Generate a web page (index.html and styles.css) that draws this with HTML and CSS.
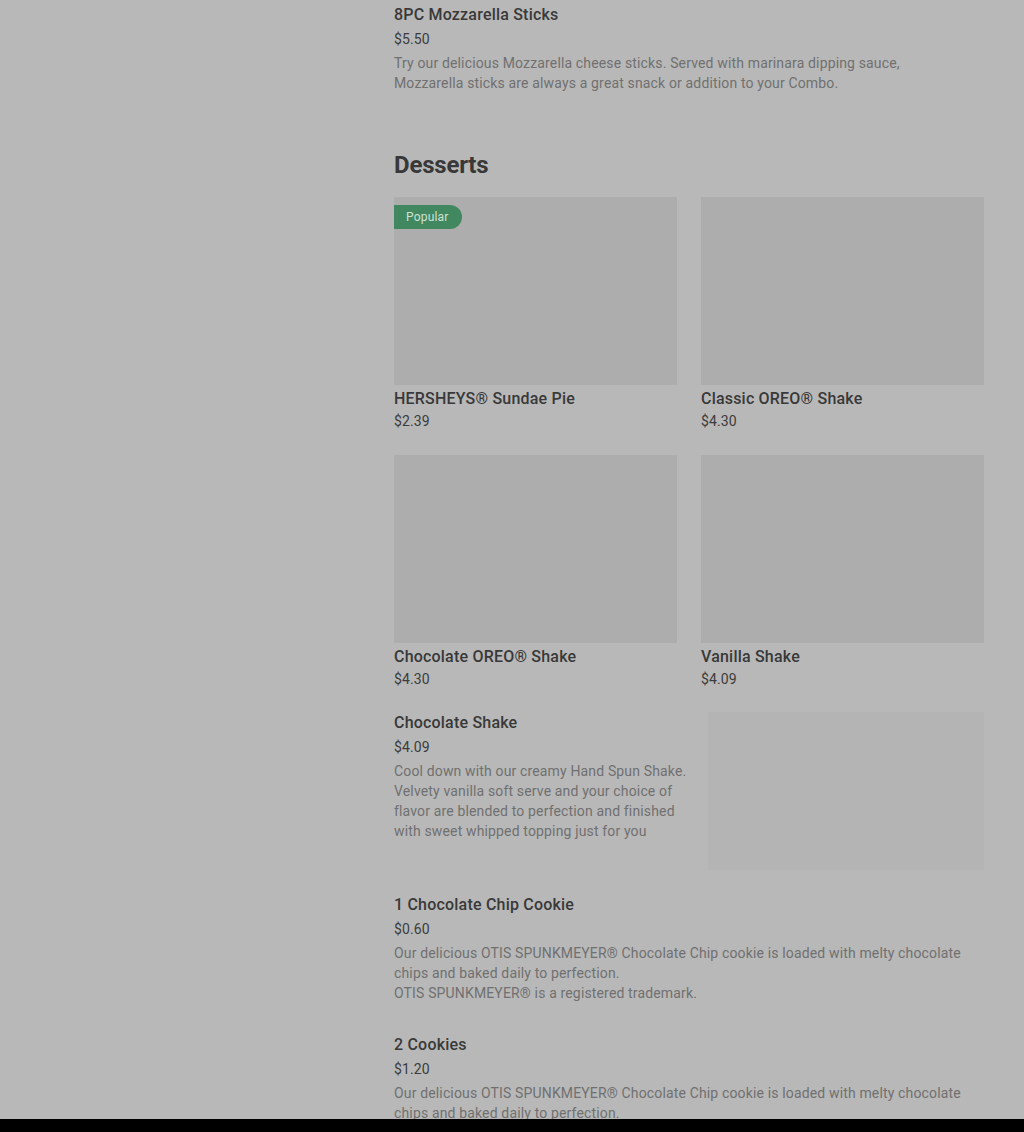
FILE: index.html
```html
<!DOCTYPE html>
<html lang="en">
<head>
    <meta charset="UTF-8">
    <meta name="viewport" content="width=device-width, initial-scale=1.0">
    <title>Menu</title>
    <link rel="stylesheet" href="styles.css">
</head>
<body>

    <div class="page">
        <div class="sidebar"></div>

        <main class="menu">
            <!-- Item terakhir dari kategori sebelumnya -->
            <div class="item item-first">
                <h3 class="item-title">8PC Mozzarella Sticks</h3>
                <div class="item-price">$5.50</div>
                <p class="item-desc">Try our delicious Mozzarella cheese sticks. Served with marinara dipping sauce, Mozzarella sticks are always a great snack or addition to your Combo.</p>
            </div>

            <h2 class="section-title">Desserts</h2>

            <div class="grid">
                <div class="card">
                    <div class="card-image">
                        <span class="badge">Popular</span>
                    </div>
                    <h3 class="item-title">HERSHEYS® Sundae Pie</h3>
                    <div class="card-price">$2.39</div>
                </div>
                <div class="card">
                    <div class="card-image"></div>
                    <h3 class="item-title">Classic OREO® Shake</h3>
                    <div class="card-price">$4.30</div>
                </div>
                <div class="card">
                    <div class="card-image"></div>
                    <h3 class="item-title">Chocolate OREO® Shake</h3>
                    <div class="card-price">$4.30</div>
                </div>
                <div class="card">
                    <div class="card-image"></div>
                    <h3 class="item-title">Vanilla Shake</h3>
                    <div class="card-price">$4.09</div>
                </div>
            </div>

            <div class="item item-row">
                <div class="item-text">
                    <h3 class="item-title">Chocolate Shake</h3>
                    <div class="item-price">$4.09</div>
                    <p class="item-desc">Cool down with our creamy Hand Spun Shake. Velvety vanilla soft serve and your choice of flavor are blended to perfection and finished with sweet whipped topping just for you</p>
                </div>
                <div class="row-image"></div>
            </div>

            <div class="item item-cookie">
                <h3 class="item-title">1 Chocolate Chip Cookie</h3>
                <div class="item-price">$0.60</div>
                <p class="item-desc">Our delicious OTIS SPUNKMEYER® Chocolate Chip cookie is loaded with melty chocolate chips and baked daily to perfection.<br>OTIS SPUNKMEYER® is a registered trademark.</p>
            </div>

            <div class="item item-cookies">
                <h3 class="item-title">2 Cookies</h3>
                <div class="item-price">$1.20</div>
                <p class="item-desc">Our delicious OTIS SPUNKMEYER® Chocolate Chip cookie is loaded with melty chocolate chips and baked daily to perfection.</p>
            </div>
        </main>
    </div>

    <!-- Bar bawah -->
    <div class="bottom-bar"></div>

</body>
</html>
```

FILE: styles.css
```css
/* Penataan Umum */
body {
    font-family: 'Roboto', 'Liberation Sans', sans-serif;
    background-color: #b8b8b8;
    margin: 0;
    padding: 0;
    color: #383838;
    overflow: hidden;
}

.page {
    display: flex;
    padding-top: 3px;
}

.sidebar {
    width: 394px;
    flex-shrink: 0;
}

.menu {
    width: 590px;
}

/* Item menu */
.item-title {
    margin: 0;
    font-size: 16px;
    font-weight: 500;
    line-height: 24px;
    letter-spacing: 0.2px;
    color: #393939;
}

.item-price {
    margin-top: 2px;
    font-size: 14px;
    line-height: 20px;
    letter-spacing: 0.1px;
    color: #3c3c3c;
}

.item-desc {
    margin: 4px 0 0;
    font-size: 14px;
    line-height: 20px;
    letter-spacing: 0.15px;
    color: #707070;
}

.item-first .item-desc {
    max-width: 540px;
}

.section-title {
    margin: 56px 0 16px;
    font-size: 24px;
    font-weight: 700;
    line-height: 32px;
    letter-spacing: -0.2px;
    color: #383838;
}

/* Grid kad */
.grid {
    display: grid;
    grid-template-columns: 1fr 1fr;
    column-gap: 24px;
    row-gap: 24px;
}

.card-image {
    position: relative;
    height: 188px;
    background-color: #adadad;
    margin-bottom: 2px;
}

.card-price {
    font-size: 14px;
    line-height: 20px;
    letter-spacing: 0.1px;
    color: #3c3c3c;
}

.badge {
    position: absolute;
    top: 8px;
    left: 0;
    height: 24px;
    line-height: 24px;
    padding: 0 13px 0 12px;
    font-size: 12px;
    letter-spacing: 0.2px;
    color: #cfe0d4;
    background-color: #41875f;
    border-radius: 0 12px 12px 0;
}

/* Item dengan gambar di sebelah */
.item-row {
    display: flex;
    gap: 18px;
    margin-top: 22px;
}

.item-text {
    width: 296px;
}

.row-image {
    width: 276px;
    height: 158px;
    margin-top: 1px;
    background-color: #b4b4b4;
}

.item-cookie {
    margin-top: 23px;
}

.item-cookies {
    margin-top: 30px;
}

.bottom-bar {
    position: fixed;
    left: 0;
    right: 0;
    bottom: 0;
    height: 13px;
    background-color: #000;
}
```
